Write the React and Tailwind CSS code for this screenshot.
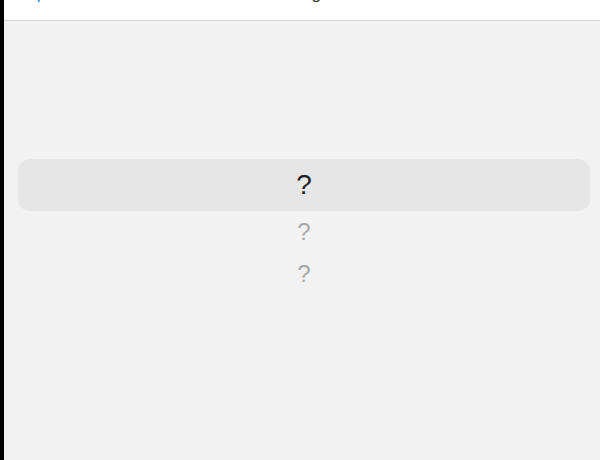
export default function App() {
  const items = ["?", "?"];

  return (
    <div className="flex h-[460px] w-[600px] bg-[#f2f2f2] font-['Liberation_Sans',Arial,sans-serif]">
      {/* window edge */}
      <div className="w-1 bg-black" />

      <div className="flex flex-1 flex-col">
        {/* header, scrolled mostly out of view */}
        <div className="h-[21px] overflow-hidden border-b border-[#d4d4d4] bg-white">
          <div className="relative -mt-[16px] flex h-5 items-center px-[10px] text-[17px] leading-5">
            <span className="text-[#2f7cf6]">‹ Up</span>
            <span className="absolute left-[264px] text-[#333]">Settings</span>
          </div>
        </div>

        {/* picker */}
        <div className="flex flex-col pl-[14px] pr-[10px] pt-[138px]">
          <div className="flex h-[52px] items-center justify-center rounded-xl bg-[#e6e6e6] text-[28px] text-[#222]">
            ?
          </div>
          {items.map((q, i) => (
            <div
              key={i}
              className="flex h-[42px] items-center justify-center text-[24px] text-[#a8a8a8]"
            >
              {q}
            </div>
          ))}
        </div>
      </div>
    </div>
  );
}
